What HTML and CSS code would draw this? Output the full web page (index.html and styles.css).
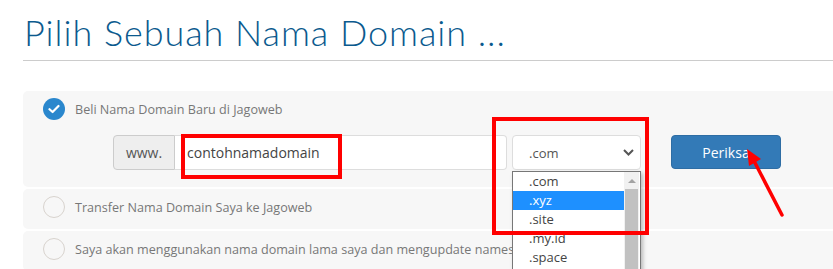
FILE: index.html
```html
<!DOCTYPE html>
<html lang="id">
<head>
    <meta charset="UTF-8">
    <meta name="viewport" content="width=device-width, initial-scale=1.0">
    <title>Pilih Domain - Jagoweb</title>
    <link rel="stylesheet" href="styles.css">
</head>
<body>

<div class="page">
    <h1 class="title">Pilih Sebuah Nama Domain ...</h1>
    <hr class="divider">

    <div class="options">
        <div class="option option-first">
            <div class="option-label">
                <span class="radio checked">
                    <svg width="12" height="10" viewBox="0 0 12 10"><path d="M1.5 5.2 L4.6 8 L10.5 2" fill="none" stroke="#fff" stroke-width="2.2" stroke-linecap="round" stroke-linejoin="round"/></svg>
                </span>
                Beli Nama Domain Baru di Jagoweb
            </div>
            <div class="domain-form">
                <div class="input-group">
                    <span class="addon">www.</span>
                    <input class="domain-input" type="text" value="contohnamadomain">
                </div>
                <div class="tld-select">
                    <div class="select-box">
                        .com
                        <svg class="chevron" width="11" height="7" viewBox="0 0 11 7"><path d="M1 1 L5.5 5.5 L10 1" fill="none" stroke="#555" stroke-width="2"/></svg>
                    </div>
                    <div class="tld-list">
                        <ul>
                            <li>.com</li>
                            <li class="selected">.xyz</li>
                            <li>.site</li>
                            <li>.my.id</li>
                            <li>.space</li>
                        </ul>
                        <div class="scrollbar">
                            <span class="scroll-up"></span>
                            <span class="scroll-thumb"></span>
                        </div>
                    </div>
                </div>
                <button class="btn-check">Periksa</button>
            </div>
        </div>
        <div class="option">
            <div class="option-label">
                <span class="radio"></span>
                Transfer Nama Domain Saya ke Jagoweb
            </div>
        </div>
        <div class="option">
            <div class="option-label">
                <span class="radio"></span>
                Saya akan menggunakan nama domain lama saya dan mengupdate nameserver
            </div>
        </div>
    </div>

    <!-- tanda merah di screenshot -->
    <div class="mark mark-input"></div>
    <div class="mark mark-select"></div>
    <svg class="mark-arrow" width="60" height="90" viewBox="0 0 60 90">
        <line x1="52" y1="84" x2="22" y2="26" stroke="#f00" stroke-width="3.5" stroke-linecap="round"/>
        <polygon points="17,18 31,28 19,35" fill="#f00"/>
    </svg>
</div>

</body>
</html>
```

FILE: styles.css
```css
* {
    margin: 0;
    padding: 0;
    box-sizing: border-box;
}
body {
    font-family: "Open Sans", Arial, sans-serif;
    background-color: #fff;
    color: #777;
    overflow: hidden;
}
.page {
    position: relative;
    padding-left: 23px;
    height: 269px;
    overflow: hidden;
}
.title {
    font-family: Lato, "Open Sans", sans-serif;
    font-weight: 300;
    font-size: 36px;
    letter-spacing: 0.95px;
    line-height: 42px;
    color: #0b5a8e;
    margin-top: 11px;
    padding-left: 1px;
}
.divider {
    border: none;
    border-top: 1px solid #ccc;
    margin-top: 7px;
    margin-bottom: 30px;
}
.options {
    display: flex;
    flex-direction: column;
    gap: 2px;
    width: 900px;
}
.option {
    background-color: #f7f7f7;
    border-radius: 5px;
    padding: 6px 0 11px 20px;
}
.option + .option {
    padding-top: 7px;
}
.option-first {
    padding: 7px 0 17px 20px;
}
.option-label {
    display: flex;
    align-items: center;
    gap: 10px;
    height: 22px;
    font-size: 12.6px;
    color: #777;
}
.radio {
    width: 22px;
    height: 22px;
    border-radius: 50%;
    border: 1px solid #d8d3ce;
    background-color: #f7f7f7;
    display: flex;
    align-items: center;
    justify-content: center;
}
.radio.checked {
    border: none;
    background-color: #2a87cd;
}
.domain-form {
    display: flex;
    align-items: flex-start;
    margin-top: 15px;
    padding-left: 70px;
}
.input-group {
    display: flex;
    width: 394px;
    height: 35px;
}
.addon {
    width: 62px;
    background-color: #eee;
    border: 1px solid #ccc;
    border-radius: 4px 0 0 4px;
    color: #555;
    font-size: 14px;
    display: flex;
    align-items: center;
    justify-content: center;
}
.domain-input {
    flex: 1;
    border: 1px solid #ddd;
    border-left: none;
    border-radius: 0 4px 4px 0;
    background-color: #fff;
    font-family: "Open Sans", Arial, sans-serif;
    font-size: 14px;
    color: #444;
    padding-left: 12px;
    outline: none;
}
.tld-select {
    position: relative;
    margin-left: 5px;
}
.select-box {
    width: 129px;
    height: 35px;
    background-color: #fff;
    border: 1px solid #ddd;
    border-radius: 4px;
    font-size: 13px;
    color: #555;
    display: flex;
    align-items: center;
    justify-content: space-between;
    padding: 0 6px 0 16px;
}
.tld-list {
    position: absolute;
    top: 36px;
    left: 0;
    width: 129px;
    height: 120px;
    background-color: #fff;
    border: 1px solid #777;
    box-shadow: 2px 2px 4px rgba(0, 0, 0, 0.25);
    display: flex;
    z-index: 10;
}
.tld-list ul {
    list-style: none;
    flex: 1;
}
.tld-list li {
    height: 19px;
    line-height: 19px;
    font-size: 13px;
    color: #444;
    padding-left: 16px;
}
.tld-list li.selected {
    background-color: #1e90ff;
    color: #fff;
}
.scrollbar {
    width: 15px;
    margin-right: 1px;
    display: flex;
    flex-direction: column;
    background-color: #f1f1f1;
}
.scroll-up {
    height: 17px;
    display: flex;
    align-items: center;
    justify-content: center;
}
.scroll-up::before {
    content: "";
    border-left: 4px solid transparent;
    border-right: 4px solid transparent;
    border-bottom: 4px solid #a3a3a3;
}
.scroll-thumb {
    flex: 1;
    margin: 0 1px;
    background-color: #c1c1c1;
}
.btn-check {
    margin-left: 30px;
    width: 110px;
    height: 34px;
    background-color: #337ab7;
    border: 1px solid #2e6da4;
    border-radius: 4px;
    color: #fff;
    font-family: "Open Sans", Arial, sans-serif;
    font-size: 14px;
    cursor: pointer;
}
.mark {
    position: absolute;
    border: 4px solid #f00;
    z-index: 20;
}
.mark-input {
    left: 181px;
    top: 134px;
    width: 161px;
    height: 45px;
}
.mark-select {
    left: 492px;
    top: 117px;
    width: 157px;
    height: 118px;
}
.mark-arrow {
    position: absolute;
    left: 730px;
    top: 131px;
    z-index: 20;
}
```
